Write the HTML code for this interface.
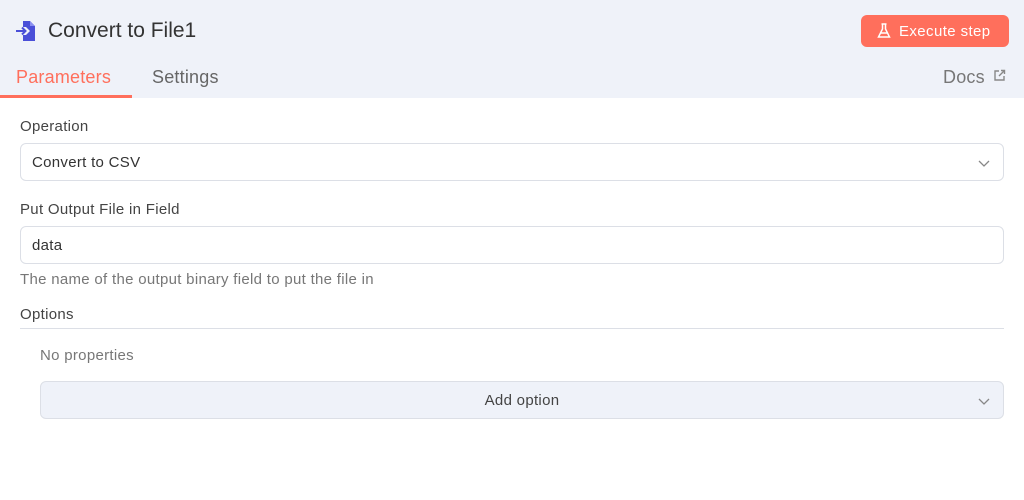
<!DOCTYPE html>
<html><head><style>
*{box-sizing:border-box;margin:0;padding:0}
body{width:1024px;height:500px;background:#fff;font-family:"Liberation Sans",sans-serif;position:relative;overflow:hidden;color:#555}
.hdr{position:absolute;left:0;top:0;width:1024px;height:98px;background:#eff2f9}
.abs{position:absolute;white-space:nowrap}
.t{font-size:15px;letter-spacing:0.3px}
.input{position:absolute;left:20px;width:984px;height:38px;border:1px solid #dcdfe6;border-radius:6px;background:#fff;font-size:15px;letter-spacing:0.3px;color:#333;padding:0 11px;line-height:38px}
.chev{position:absolute;right:12px;top:12px}
</style></head><body>
<div class="hdr"></div>
<svg class="abs" style="left:15px;top:20px" width="22" height="22" viewBox="0 0 22 22">
<path d="M8 1h7l5 5v15H8v-6h3l4-4-4-4H8z" fill="#4a4fd8"/>
<path d="M15 1v5h5" fill="#8a8ff0"/>
<path d="M1 11h9M7 7.5l3.5 3.5L7 14.5" stroke="#4a4fd8" stroke-width="2" fill="none"/>
</svg>
<div class="abs" style="left:48px;top:19px;font-size:21px;color:#333">Convert to File1</div>
<div class="abs" style="left:861px;top:15px;width:148px;height:32px;background:#ff6f5c;border-radius:6px;color:#fff;font-size:15px;letter-spacing:0.4px;line-height:33px;padding-left:38px">Execute step</div>
<svg class="abs" style="left:877px;top:23px" width="14" height="16" viewBox="0 0 14 16"><path d="M4.5 1h5M5.5 1v5L1.5 14h11L8.5 6V1M3 10h8" stroke="#fff" stroke-width="1.5" fill="none"/></svg>
<div class="abs" style="left:16px;top:67px;font-size:18px;letter-spacing:0.2px;color:#ff6f5c">Parameters</div>
<div class="abs" style="left:0;top:95px;width:132px;height:3px;background:#ff6f5c"></div>
<div class="abs" style="left:152px;top:67px;font-size:18px;letter-spacing:0.2px;color:#666">Settings</div>
<div class="abs" style="left:943px;top:67px;font-size:18px;letter-spacing:0.2px;color:#777">Docs</div>
<svg class="abs" style="left:993px;top:69px" width="13" height="13" viewBox="0 0 13 13"><path d="M6 2H2v9h9V7M8 1.5h3.5V5M11.5 1.5L6 7" stroke="#888" stroke-width="1.4" fill="none"/></svg>
<div class="abs t" style="left:20px;top:118px;color:#444">Operation</div>
<div class="input" style="top:143px">Convert to CSV<svg class="chev" width="14" height="14" viewBox="0 0 14 14"><path d="M2 5l5 5 5-5" stroke="#888" stroke-width="1.3" fill="none"/></svg></div>
<div class="abs t" style="left:20px;top:201px;color:#444">Put Output File in Field</div>
<div class="input" style="top:226px">data</div>
<div class="abs t" style="left:20px;top:271px;color:#777">The name of the output binary field to put the file in</div>
<div class="abs t" style="left:20px;top:306px;color:#444">Options</div>
<div class="abs" style="left:20px;top:328px;width:984px;height:1px;background:#dcdfe6"></div>
<div class="abs t" style="left:40px;top:347px;color:#777">No properties</div>
<div class="abs" style="left:40px;top:381px;width:964px;height:38px;background:#eff2f9;border:1px solid #dcdfe6;border-radius:6px;font-size:15px;letter-spacing:0.3px;color:#444;text-align:center;line-height:38px">Add option<svg class="chev" width="14" height="14" viewBox="0 0 14 14"><path d="M2 5l5 5 5-5" stroke="#888" stroke-width="1.3" fill="none"/></svg></div>
</body></html>
